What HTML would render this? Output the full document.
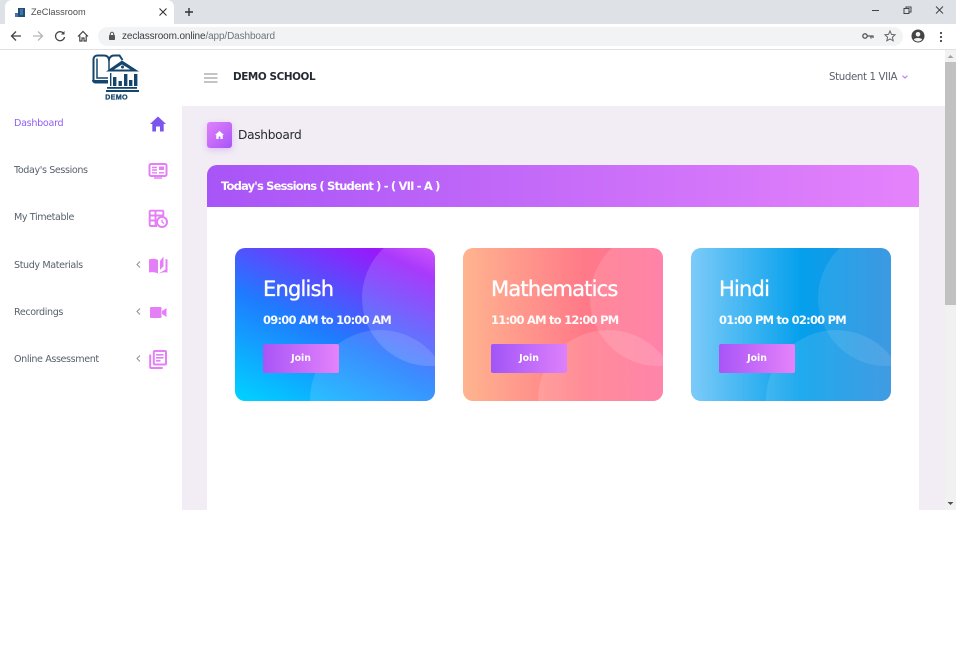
<!DOCTYPE html>
<html><head><meta charset="utf-8"><title>ZeClassroom</title>
<style>
html,body{margin:0;padding:0;width:960px;height:658px;overflow:hidden;background:#fff;font-family:"Liberation Sans","DejaVu Sans",sans-serif}
.a{position:absolute;white-space:nowrap}
svg{position:absolute;overflow:visible}
.nav{font-family:"DejaVu Sans",sans-serif;font-size:9.6px;color:#59606e;left:14px;letter-spacing:-.4px;line-height:12px}
.card{position:absolute;top:248px;width:200px;height:153px;border-radius:10px;overflow:hidden}
.card svg{left:0;top:0}
.card .t{position:absolute;left:28px;top:28px;font-family:"DejaVu Sans",sans-serif;font-size:21px;color:#fff;line-height:27px;letter-spacing:-.8px;-webkit-text-stroke:.35px #fff;white-space:nowrap}
.card .s{position:absolute;left:28px;top:64px;font-family:"DejaVu Sans",sans-serif;font-size:11.5px;font-weight:bold;color:#fff;line-height:16px;letter-spacing:-.77px;white-space:nowrap;opacity:.97}
.card .b{position:absolute;left:28px;top:96px;width:76px;height:29px;border-radius:2px;color:#fff;font-family:"DejaVu Sans",sans-serif;font-size:9.4px;font-weight:bold;line-height:29px;text-align:center;background:linear-gradient(90deg,#a855f7,#e583fa)}
</style></head><body>

<!-- browser chrome -->
<div class="a" style="left:0;top:0;width:956px;height:24px;background:#dee1e6"></div>
<div class="a" style="left:5px;top:0;width:169px;height:24px;background:#fff;border-radius:7px 7px 0 0"></div>
<svg style="left:14px;top:7px" width="12" height="11" viewBox="0 0 12 11"><rect x="4" y="1" width="7" height="9" fill="#1c4f7c"/><rect x="1" y="6" width="3" height="4" fill="#4a6fb0"/><path d="M6 3h3M6 5h3M6 7h3" stroke="#8fb0cf" stroke-width=".8"/></svg>
<div class="a" style="left:31px;top:6px;font-size:9.2px;line-height:12px;color:#4a4d50">ZeClassroom</div>
<svg style="left:159px;top:8px" width="8" height="8" viewBox="0 0 8 8"><path d="M.5 .5l7 7M7.500 .5l-7 7" stroke="#333" stroke-width="1.100"/></svg>
<svg style="left:184px;top:7px" width="10" height="10" viewBox="0 0 10 10"><path d="M5 1v8M1 5h8" stroke="#333" stroke-width="1.400"/></svg>
<svg style="left:872px;top:5px" width="70" height="12" viewBox="0 0 70 12"><path d="M0 5.500h7" stroke="#444" stroke-width="1"/><rect x="32" y="3.500" width="5" height="5" fill="none" stroke="#444"/><path d="M34 3.500v-1.500h5v5h-2" fill="none" stroke="#444"/><path d="M64 1.500l7 7M71 1.500l-7 7" stroke="#444" stroke-width="1"/></svg>

<div class="a" style="left:0;top:24px;width:956px;height:25px;background:#fff"></div>
<div class="a" style="left:0;top:49px;width:956px;height:1px;background:#dfe1e5"></div>
<svg style="left:10px;top:30px" width="12" height="12" viewBox="0 0 12 12"><path d="M11 6H2M6 1.500L1.500 6 6 10.500" fill="none" stroke="#444" stroke-width="1.300"/></svg>
<svg style="left:32px;top:30px" width="12" height="12" viewBox="0 0 12 12"><path d="M1 6h9M6 1.500L10.500 6 6 10.500" fill="none" stroke="#b4b6b9" stroke-width="1.300"/></svg>
<svg style="left:54px;top:30px" width="12" height="12" viewBox="0 0 12 12"><path d="M10 4a4.500 4.500 0 1 0 .5 3" fill="none" stroke="#444" stroke-width="1.300"/><path d="M10.500 1v3.500H7z" fill="#444"/></svg>
<svg style="left:77px;top:30px" width="12" height="12" viewBox="0 0 12 12"><path d="M1 6.500L6 1.500l5 5M2.800 5.500V11h2.200V8h2v3h2.200V5.500" fill="none" stroke="#444" stroke-width="1.200"/></svg>
<div class="a" style="left:98px;top:27px;width:805px;height:19px;background:#f1f3f4;border-radius:10px"></div>
<svg style="left:108px;top:31px" width="8" height="10" viewBox="0 0 8 10"><rect x="1" y="4" width="6" height="5" rx=".8" fill="#555"/><path d="M2.300 4V3a1.700 1.700 0 0 1 3.400 0v1" fill="none" stroke="#555"/></svg>
<div class="a" style="left:122px;top:30px;font-size:10px;line-height:13px;letter-spacing:-.12px;color:#3a3d40">zeclassroom.online<span style="color:#70757a">/app/Dashboard</span></div>
<svg style="left:862px;top:32px" width="12" height="9" viewBox="0 0 12 9"><circle cx="3" cy="4" r="2.200" fill="none" stroke="#555" stroke-width="1.300"/><path d="M5 4h6.500M9 4v2.500M11 4v2" stroke="#555" stroke-width="1.300"/></svg>
<svg style="left:884px;top:30px" width="12" height="12" viewBox="0 0 12 12"><path d="M6 1l1.500 3.400 3.600.4-2.700 2.400.8 3.600L6 9l-3.200 1.800.8-3.600L.9 4.800l3.600-.4z" fill="none" stroke="#666" stroke-width="1"/></svg>
<svg style="left:911px;top:29px" width="14" height="14" viewBox="0 0 14 14"><circle cx="7" cy="7" r="6.500" fill="#444"/><circle cx="7" cy="5.300" r="2.300" fill="#f1f3f4"/><path d="M2.800 10.500c1-2 7.400-2 8.400 0-1.200 1.400-2.600 2-4.200 2s-3-.6-4.200-2z" fill="#f1f3f4"/></svg>
<svg style="left:939px;top:31px" width="4" height="12" viewBox="0 0 4 12"><circle cx="2" cy="2" r="1.100" fill="#444"/><circle cx="2" cy="6" r="1.100" fill="#444"/><circle cx="2" cy="10" r="1.100" fill="#444"/></svg>

<!-- page backgrounds -->
<div class="a" style="left:182px;top:106px;width:763px;height:404px;background:#f2edf4"></div>
<div class="a" style="left:207px;top:207px;width:712px;height:303px;background:#fff"></div>

<!-- scrollbar -->
<div class="a" style="left:945px;top:50px;width:11px;height:460px;background:#f1f1f1"></div>
<div class="a" style="left:945px;top:62px;width:11px;height:243px;background:#c1c1c1"></div>
<svg style="left:947px;top:54px" width="7" height="5" viewBox="0 0 7 5"><path d="M3.500 1L6.500 4H.5z" fill="#a3a3a3"/></svg>
<svg style="left:947px;top:501px" width="7" height="5" viewBox="0 0 7 5"><path d="M.5 1h6L3.500 4z" fill="#505050"/></svg>

<!-- logo -->
<svg style="left:92px;top:54px" width="48" height="48" viewBox="0 0 48 48">
<path d="M1.500 27V5.500C1.500 3 3 1.500 5.500 1.500H12c3 0 4.500 1.500 5 4 .8-2.500 2.500-4 5-4h5.500l3 4.500" fill="none" stroke="#14466d" stroke-width="2"/>
<path d="M17 5.500V17M5 4.500V24h11" fill="none" stroke="#14466d" stroke-width="1.500"/>
<path d="M0 26h16v3.500H3.500C1.500 29.500 0 28 0 26z" fill="#14466d"/>
<path d="M14 17.500L30 6.500 47 17.500z" fill="#14466d"/><path d="M22 15.500L30 10.500 38.500 15.500z" fill="#fff"/><circle cx="30.500" cy="13" r="1.500" fill="#14466d"/>
<rect x="21" y="23" width="3.400" height="9" fill="#14466d"/><rect x="26.500" y="27" width="3.400" height="5" fill="#14466d"/><rect x="32" y="20" width="3.400" height="12" fill="#14466d"/><rect x="37" y="26" width="3.400" height="6" fill="#14466d"/><rect x="42" y="20" width="3.400" height="12" fill="#14466d"/>
<rect x="18" y="19" width="1.400" height="13" fill="#14466d"/>
<rect x="15" y="33" width="30" height="1.800" fill="#14466d"/><rect x="14" y="36" width="33" height="2" fill="#14466d"/>
<text x="24.500" y="45.500" text-anchor="middle" font-family="Liberation Sans" font-weight="bold" font-size="7.200" fill="#14466d" stroke="#14466d" stroke-width=".25" letter-spacing=".3">DEMO</text>
</svg>

<!-- header -->
<svg style="left:204px;top:73px" width="14" height="10" viewBox="0 0 14 10"><path d="M0 1h13.500M0 5h13.500M0 9h13.500" stroke="#8a8a8a" stroke-width="1.100"/></svg>
<div class="a" style="left:233px;top:70px;font-family:'DejaVu Sans',sans-serif;font-weight:bold;font-size:10.4px;line-height:14px;color:#252a33;letter-spacing:-.4px">DEMO SCHOOL</div>
<div class="a" style="left:829px;top:71px;font-family:'DejaVu Sans',sans-serif;font-size:10.200px;line-height:14px;color:#59606e;letter-spacing:-.35px">Student 1 VIIA</div>
<svg style="left:902px;top:75px" width="6" height="4" viewBox="0 0 6 4"><path d="M.5 .7L3 3 5.500 .7" fill="none" stroke="#c084f5" stroke-width="1.200"/></svg>

<!-- sidebar -->
<div class="a nav" style="top:118px;color:#8f5ff5;letter-spacing:-.3px">Dashboard</div>
<div class="a nav" style="top:165px">Today's Sessions</div>
<div class="a nav" style="top:212px">My Timetable</div>
<div class="a nav" style="top:260px">Study Materials</div>
<div class="a nav" style="top:307px">Recordings</div>
<div class="a nav" style="top:354px">Online Assessment</div>

<svg style="left:150px;top:116px" width="16" height="16" viewBox="0 0 16 16"><path d="M8 .5L16 8h-2.300v7.500h-3.700v-5H6v5H2.300V8H0z" fill="#7b55ee"/></svg>
<svg style="left:148px;top:163px" width="20" height="16" viewBox="0 0 20 16"><rect x="1.500" y="1" width="17" height="12" rx="1.500" fill="none" stroke="#e47ff7" stroke-width="2"/><path d="M4 4.500h5M4 7h5M4 9.800h5" stroke="#e47ff7" stroke-width="1.400"/><rect x="11" y="3.500" width="5" height="3.500" fill="#e47ff7"/><path d="M11 9.800h5" stroke="#e47ff7" stroke-width="1.400"/><path d="M6 15h8" stroke="#e47ff7" stroke-width="1.500"/></svg>
<svg style="left:149px;top:210px" width="19" height="18" viewBox="0 0 19 18"><path d="M8 16H1.500a.8.800 0 0 1-.8-.8V1.500A.8.800 0 0 1 1.500 .7h12a.8.800 0 0 1 .8.800V7" fill="none" stroke="#e47ff7" stroke-width="1.900"/><path d="M1 5.500h13M1 10.500h7.500M6.500 1v15" stroke="#e47ff7" stroke-width="1.900"/><circle cx="13" cy="12" r="5" fill="#fff" stroke="#e47ff7" stroke-width="2"/><path d="M13 9.500V12l2 1.500" fill="none" stroke="#e47ff7" stroke-width="1.300"/></svg>
<svg style="left:148px;top:256px" width="20" height="18" viewBox="0 0 20 18"><path d="M1 3.500c3-1 6-1 9 .5v13.500C7 16 4 15.800 1 16.500z" fill="#e47ff7"/><path d="M12 5L15.500 .5v9.800L12 14z" fill="#e47ff7"/><path d="M17.500 3v10.500l-6 3.500v.5c3-1.500 5.500-1.500 8-1V3.500z" fill="#e47ff7"/></svg>
<svg style="left:150px;top:306px" width="17" height="13" viewBox="0 0 17 13"><rect x="0" y="1" width="11.500" height="11" rx="1" fill="#e47ff7"/><path d="M12 5l4.500-3v9L12 8z" fill="#e47ff7"/></svg>
<svg style="left:149px;top:350px" width="18" height="19" viewBox="0 0 18 19"><path d="M1.200 4.500V17a1 1 0 0 0 1 1h11.500" fill="none" stroke="#e47ff7" stroke-width="2"/><rect x="4.800" y="1" width="12.200" height="13.500" rx="1" fill="none" stroke="#e47ff7" stroke-width="2"/><path d="M7 4.800h7.500M7 7.800h7.500M7 10.800h4.500" stroke="#e47ff7" stroke-width="1.700"/></svg>

<svg style="left:136px;top:261px" width="5" height="7" viewBox="0 0 5 7"><path d="M4 .5L1 3.500 4 6.500" fill="none" stroke="#8d9098" stroke-width="1"/></svg>
<svg style="left:136px;top:308px" width="5" height="7" viewBox="0 0 5 7"><path d="M4 .5L1 3.500 4 6.500" fill="none" stroke="#8d9098" stroke-width="1"/></svg>
<svg style="left:136px;top:355px" width="5" height="7" viewBox="0 0 5 7"><path d="M4 .5L1 3.500 4 6.500" fill="none" stroke="#8d9098" stroke-width="1"/></svg>

<!-- breadcrumb -->
<div class="a" style="left:207px;top:122px;width:25px;height:26px;border-radius:3px;background:linear-gradient(135deg,#e081fa,#a855f7);box-shadow:0 2px 7px rgba(168,85,247,.3)"></div>
<svg style="left:215px;top:131px" width="9" height="8" viewBox="0 0 9 8"><path d="M4.500 0L9 4H7.700v4H5.400V5.500H3.600V8H1.300V4H0z" fill="#fff"/></svg>
<div class="a" style="left:238px;top:127px;font-family:'DejaVu Sans',sans-serif;font-size:12.2px;line-height:16px;color:#252a33;letter-spacing:-.3px">Dashboard</div>

<!-- panel header -->
<div class="a" style="left:207px;top:165px;width:712px;height:42px;border-radius:10px 10px 0 0;background:linear-gradient(90deg,#a855f7,#e583fb)"></div>
<div class="a" style="left:221px;top:178px;font-family:'DejaVu Sans',sans-serif;font-weight:bold;font-size:11.500px;line-height:16px;color:#fff;letter-spacing:-.82px">Today's Sessions ( Student ) - ( VII - A )</div>

<!-- cards -->
<div class="card" style="left:235px;background:linear-gradient(205deg,#c936fb 0%,#9a18fb 12%,#1f7bff 55%,#00d4ff 100%)">
<svg width="200" height="153" viewBox="0 0 200 153"><circle cx="195" cy="50" r="68" fill="#fff" fill-opacity=".15"/><circle cx="145" cy="152" r="70" fill="#fff" fill-opacity=".13"/></svg>
<div class="t">English</div><div class="s">09:00 AM to 10:00 AM</div><div class="b">Join</div></div>

<div class="card" style="left:463px;background:linear-gradient(90deg,#ffb48f 0%,#ff7a88 60%,#ff709c 100%)">
<svg width="200" height="153" viewBox="0 0 200 153"><circle cx="195" cy="50" r="68" fill="#fff" fill-opacity=".13"/><circle cx="145" cy="152" r="70" fill="#fff" fill-opacity=".14"/></svg>
<div class="t">Mathematics</div><div class="s">11:00 AM to 12:00 PM</div><div class="b" style="background:linear-gradient(90deg,#a155f8,#dd80fb)">Join</div></div>

<div class="card" style="left:691px;background:linear-gradient(90deg,#7ccbf8 0%,#05a0ec 55%,#2a8fdf 100%)">
<svg width="200" height="153" viewBox="0 0 200 153"><circle cx="195" cy="50" r="68" fill="#fff" fill-opacity=".09"/><circle cx="145" cy="152" r="70" fill="#fff" fill-opacity=".11"/></svg>
<div class="t">Hindi</div><div class="s">01:00 PM to 02:00 PM</div><div class="b">Join</div></div>

</body></html>
